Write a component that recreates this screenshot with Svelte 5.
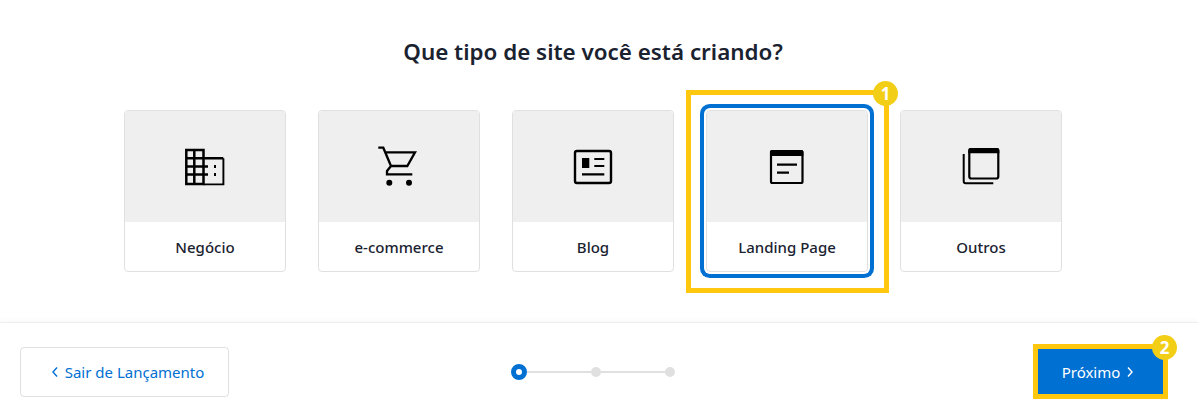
<script lang="ts">
	const types = [
		{ id: 'business', label: 'Negócio' },
		{ id: 'shop', label: 'e-commerce' },
		{ id: 'blog', label: 'Blog' },
		{ id: 'landing', label: 'Landing Page' },
		{ id: 'other', label: 'Outros' }
	];
	let selected = $state('landing');
</script>

<div class="page">
	<main class="content">
		<h1>Que tipo de site você está criando?</h1>
		<div class="cards">
			{#each types as type}
				<button class="card" class:selected={selected === type.id} onclick={() => (selected = type.id)}>
					<span class="thumb">
						<svg width="48" height="48" viewBox="0 0 48 48" fill="none" stroke="#000" stroke-width="2">
							{#if type.id === 'business'}
								<path d="M5.3 42V8h17.2v34zM13.3 8v34M5.3 16.2H42.3M5.3 24.5H27M5.3 32.6H27" stroke-width="2.5" />
								<path d="M22.3 42.4H42.4V16.2" stroke-width="1.9" />
								<path d="M34 23v3M34 31v3" />
							{:else if type.id === 'shop'}
								<path d="M3.3 5.7H8.3L16 24H32.3L40 10.3H10.7M16 24L12 29V32.3H37.3" stroke-width="2.3" />
								<circle cx="14.3" cy="40.7" r="3" fill="#000" stroke="none" />
								<circle cx="34" cy="40.7" r="3" fill="#000" stroke="none" />
							{:else if type.id === 'blog'}
								<rect x="6" y="9" width="36" height="32" rx="2" stroke-width="2.4" />
								<rect x="13" y="16" width="7.3" height="10" fill="#000" stroke="none" />
								<path d="M25.3 17H35.3M25.3 24H35.3M13 32.3H35.3" stroke-width="2.2" />
							{:else if type.id === 'landing'}
								<rect x="8" y="9" width="31.5" height="32" rx="1.5" stroke-width="2.2" />
								<path d="M7 9.5A1.5 1.5 0 0 1 8.5 8H38.8A1.5 1.5 0 0 1 40.3 9.5V14H7z" fill="#000" stroke="none" />
								<path d="M14 22.7H34M14 30.7H26" stroke-width="2.2" />
							{:else}
								<rect x="12.3" y="7" width="29" height="29.5" rx="2" stroke-width="2.2" />
								<path d="M11.3 8A2 2 0 0 1 13.3 6H40.3A2 2 0 0 1 42.3 8V11.3H11.3z" fill="#000" stroke="none" />
								<path d="M6.7 12V39.3A2 2 0 0 0 8.7 41.3H36.3" />
							{/if}
						</svg>
					</span>
					<span class="label">{type.label}</span>
					{#if type.id === 'landing'}
						<span class="callout card-callout"><span class="badge">1</span></span>
					{/if}
				</button>
			{/each}
		</div>
	</main>

	<footer class="footer">
		<button class="exit">
			<svg width="8" height="12" viewBox="0 0 8 12" fill="none" stroke="currentColor" stroke-width="1.4"><path d="M6 1.5L2 6l4 4.5" /></svg>
			Sair de Lançamento
		</button>

		<div class="stepper">
			<span class="dot current"></span>
			<span class="line"></span>
			<span class="dot"></span>
			<span class="line"></span>
			<span class="dot"></span>
		</div>

		<button class="next">
			Próximo
			<svg width="8" height="12" viewBox="0 0 8 12" fill="none" stroke="currentColor" stroke-width="1.4"><path d="M2 1.5L6 6l-4 4.5" /></svg>
			<span class="callout next-callout"><span class="badge">2</span></span>
		</button>
	</footer>
</div>

<style>
	:global(body) {
		background: #fff;
	}

	.page {
		width: 1198px;
		height: 418px;
		overflow: hidden;
		display: flex;
		flex-direction: column;
		font-family: 'Noto Sans', 'Open Sans', sans-serif;
		color: #1a2230;
	}

	.content {
		height: 322px;
		display: flex;
		flex-direction: column;
		align-items: center;
		padding: 36px 12px 0 0;
		box-sizing: border-box;
		background: #fff;
	}

	h1 {
		margin: 0 0 42px;
		font-size: 22.4px;
		line-height: 32px;
		font-weight: 600;
	}

	.cards {
		display: flex;
		gap: 32px;
	}

	button {
		font-family: inherit;
		cursor: pointer;
		padding: 0;
	}

	.card {
		position: relative;
		width: 162px;
		height: 162px;
		display: flex;
		flex-direction: column;
		background: #fff;
		border: 1px solid #e0e0e0;
		border-radius: 4px;
		color: inherit;
	}

	.card.selected {
		box-shadow: 0 0 0 2px #fff, 0 0 0 6px #0070d2;
	}

	.thumb {
		width: 100%;
		height: 111px;
		flex: none;
		display: flex;
		justify-content: center;
		padding-top: 31px;
		box-sizing: border-box;
		background: #efefef;
		border-radius: 3px 3px 0 0;
	}

	.label {
		width: 100%;
		flex: 1;
		display: flex;
		align-items: center;
		justify-content: center;
		font-size: 15px;
		font-weight: 500;
	}

	.callout {
		position: absolute;
		border: 5px solid #ffc80f;
		pointer-events: none;
	}

	.card-callout {
		top: -21px;
		left: -21px;
		right: -22px;
		bottom: -22px;
	}

	.next-callout {
		top: -3px;
		left: -5px;
		right: -5px;
		bottom: -2px;
	}

	.badge {
		position: absolute;
		top: -14px;
		right: -14px;
		width: 25px;
		height: 25px;
		border-radius: 50%;
		background: #f2cf16;
		color: #fff;
		font-size: 17px;
		line-height: 25px;
		font-weight: 700;
		text-align: center;
	}

	.footer {
		flex: 1;
		display: flex;
		align-items: center;
		justify-content: space-between;
		padding: 2px 35px 0 20px;
		border-top: 1px solid #eee;
		box-shadow: 0 -3px 5px rgba(0, 0, 0, 0.02);
		background: #fff;
		position: relative;
	}

	.exit,
	.next {
		height: 50px;
		display: flex;
		align-items: center;
		justify-content: center;
		gap: 6px;
		font-size: 15px;
		border-radius: 2px;
	}

	.exit {
		width: 209px;
		padding-left: 6px;
		background: #fff;
		border: 1px solid #e0e0e0;
		border-radius: 4px;
		color: #0070d2;
	}

	.next {
		position: relative;
		width: 125px;
		padding-right: 5px;
		background: #0070d2;
		border: none;
		color: #fff;
	}

	.stepper {
		display: flex;
		align-items: center;
		margin-right: 82px;
	}

	.dot {
		width: 10px;
		height: 10px;
		border-radius: 50%;
		background: #e0e0e0;
	}

	.dot.current {
		width: 6px;
		height: 6px;
		background: #fff;
		border: 5px solid #0070d2;
	}

	.line {
		width: 64px;
		height: 2px;
		background: #e0e0e0;
	}
</style>
